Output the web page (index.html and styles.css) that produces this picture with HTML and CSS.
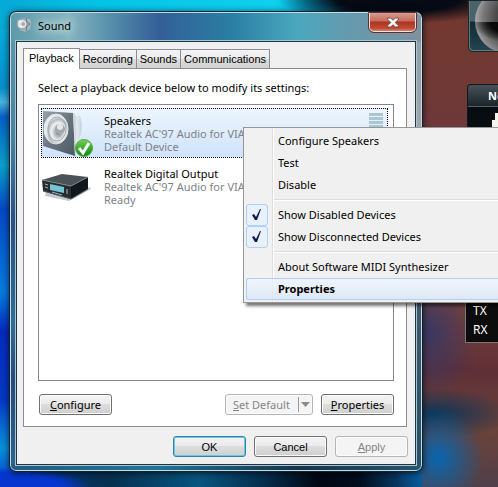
FILE: index.html
```html
<!DOCTYPE html>
<html lang="en">
<head>
<meta charset="utf-8">
<meta name="viewport" content="width=device-width, initial-scale=1">
<title>Sound</title>
<link rel="stylesheet" href="styles.css">
</head>
<body>
<div class="desktop">
  <aside class="gadget moon-gadget" aria-label="Moon">
    <svg width="64" height="64" viewBox="0 0 64 64" aria-hidden="true">
      <defs>
        <radialGradient id="moon" cx=".66" cy=".45" r=".66"><stop offset="0" stop-color="#444"/><stop offset=".5" stop-color="#4a4a4a"/><stop offset=".8" stop-color="#777"/><stop offset="1" stop-color="#aaa"/></radialGradient>
        <radialGradient id="shade" cx=".66" cy="0" r=".7" gradientUnits="objectBoundingBox"><stop offset=".6" stop-color="#080808"/><stop offset="1" stop-color="#080808" stop-opacity=".1"/></radialGradient>
      </defs>
      <circle cx="34" cy="30" r="32" fill="url(#moon)"/>
      <path d="M2 31H66A32 31 0 0 1 2 31Z" fill="url(#shade)"/>
    </svg>
  </aside>
  <aside class="gadget net-gadget">
    <div class="net-title">Ne</div>
    <svg width="40" height="30" viewBox="0 0 40 30" aria-hidden="true"><path d="M24 21V13H27V6H40V21Z" fill="#f4f4ee"/></svg>
  </aside>
  <aside class="gadget traffic-gadget"><div>TX</div><div>RX</div></aside>

  <main class="window">
    <header class="titlebar">
      <svg class="title-icon" width="16" height="16" viewBox="0 0 16 16" aria-hidden="true">
        <path d="M1 3L8 1L14 2L15 5L14 12L9 15L4 13L1 9Z" fill="#aab4b9"/>
        <circle cx="6" cy="7" r="5" fill="#dde2e4" stroke="#8b989f"/>
        <circle cx="7" cy="7" r="2" fill="#a3adb3"/>
        <path d="M10 1L11 5L14 7L11 9L10 14" fill="none" stroke="#6d7b83"/>
        <path d="M3 4L6 6M4 10L6 8" stroke="#fff"/>
      </svg>
      <h1 class="title">Sound</h1>
      <button class="close" type="button" aria-label="Close">
        <svg width="14" height="11" viewBox="0 0 12 10" aria-hidden="true"><path d="M1 1H4L6 3L8 1H11V2L8 5L11 8V9H8L6 7L4 9H1V8L4 5L1 2Z" fill="#fff" stroke="#5e3434" stroke-width=".7"/></svg>
      </button>
    </header>
    <div class="client">
      <div class="tabs" role="tablist">
        <button class="tab active" type="button" role="tab" aria-selected="true">Playback</button>
        <button class="tab" type="button" role="tab" aria-selected="false">Recording</button>
        <button class="tab" type="button" role="tab" aria-selected="false">Sounds</button>
        <button class="tab" type="button" role="tab" aria-selected="false">Communications</button>
      </div>
      <section class="panel" role="tabpanel">
        <p class="prompt">Select a playback device below to modify its settings:</p>
        <ul class="devices">
          <li class="device selected">
            <svg class="device-icon" width="52" height="48" viewBox="0 0 52 48" aria-hidden="true">
              <defs>
                <linearGradient id="box" x2="1" y2="1"><stop stop-color="#98a2a9"/><stop offset=".5" stop-color="#69757e"/><stop offset="1" stop-color="#4c5962"/></linearGradient>
                <linearGradient id="side" x2="1"><stop stop-color="#a9b5bf"/><stop offset=".5" stop-color="#e4ebf0"/><stop offset="1" stop-color="#c1cfdb"/></linearGradient>
                <radialGradient id="cone" cx=".6" cy=".6"><stop stop-color="#737b80"/><stop offset=".3" stop-color="#b3babd"/><stop offset=".6" stop-color="#f0f2f3"/><stop offset=".85" stop-color="#b1b9be"/><stop offset="1" stop-color="#e7eaec"/></radialGradient>
                <linearGradient id="ok" y2="1" x2="0"><stop stop-color="#79d45b"/><stop offset=".5" stop-color="#39ab2b"/><stop offset="1" stop-color="#168718"/></linearGradient>
              </defs>
              <path d="M30 6L38 7Q42 18 37 31L32 38Z" fill="url(#side)"/>
              <path d="M1 2L31 4L33 47L1 37Z" fill="url(#box)"/>
              <path d="M31 4L33 47L34 46L33 5Z" fill="#d3dbe0"/>
              <ellipse cx="14" cy="20" rx="12" ry="15" fill="url(#cone)" stroke="#e4e8ea"/>
              <ellipse cx="15" cy="20" rx="9" ry="12" fill="none" stroke="#a1aaaf"/>
              <circle cx="18" cy="20" r="5" fill="#a2aaae"/>
              <circle cx="18" cy="18" r="3" fill="#e5e7e8"/>
              <circle cx="42" cy="39" r="8.500" fill="url(#ok)" stroke="#53a945"/>
              <path d="M37 39L41 44L47 34" fill="none" stroke="#fff" stroke-width="3"/>
            </svg>
            <div class="device-text"><strong>Speakers</strong><span>Realtek AC'97 Audio for VIA</span><span>Default Device</span></div>
            <div class="meter"><i></i><i></i><i></i><i></i><i></i><i></i><i></i></div>
          </li>
          <li class="device">
            <svg class="device-icon" width="52" height="48" viewBox="0 0 52 48" aria-hidden="true">
              <path d="M4 28L26 34L48 25L49 27L27 39L3 34Z" fill="#c5cbd0"/>
              <path d="M0 18L20 12L46 15L29 24Z" fill="#4c5358"/>
              <path d="M0 18L29 24V37L1 29Z" fill="#262d31"/>
              <path d="M29 24L46 15V27L29 37Z" fill="#11171a"/>
              <path d="M0 18L29 24L46 15" fill="none" stroke="#7c858a"/>
              <path d="M8 22L22 25V31L8 28Z" fill="#75c5d5"/>
              <path d="M3 22L6 23M3 25L6 26M25 27V32M10 30L20 33" stroke="#a9b5bb"/>
              <path d="M1 29L29 37L46 27" fill="none" stroke="#50595f"/>
            </svg>
            <div class="device-text"><strong>Realtek Digital Output</strong><span>Realtek AC'97 Audio for VIA</span><span>Ready</span></div>
          </li>
        </ul>
        <div class="actions">
          <button class="btn" type="button"><u>C</u>onfigure</button>
          <span class="spacer"></span>
          <button class="btn split" type="button" disabled><span><u>S</u>et Default</span><span class="arrow"><svg width="9" height="5" viewBox="0 0 9 5" aria-hidden="true"><path d="M0 0H9L4.500 5Z" fill="#8b8b8b"/></svg></span></button>
          <button class="btn" type="button"><u>P</u>roperties</button>
        </div>
      </section>
      <footer class="footer">
        <button class="btn primary" type="button">OK</button>
        <button class="btn" type="button">Cancel</button>
        <button class="btn" type="button" disabled><u>A</u>pply</button>
      </footer>
    </div>
  </main>

  <div class="menu" role="menu">
    <button class="item" type="button" role="menuitem">Configure Speakers</button>
    <button class="item" type="button" role="menuitem">Test</button>
    <button class="item" type="button" role="menuitem">Disable</button>
    <hr>
    <button class="item" type="button" role="menuitemcheckbox" aria-checked="true"><span class="check"><svg width="10" height="12" viewBox="0 0 10 12" aria-hidden="true"><path d="M0 6L2 5L4 8L8 0H9L5 11H3Z" fill="#15154f"/></svg></span>Show Disabled Devices</button>
    <button class="item" type="button" role="menuitemcheckbox" aria-checked="true"><span class="check"><svg width="10" height="12" viewBox="0 0 10 12" aria-hidden="true"><path d="M0 6L2 5L4 8L8 0H9L5 11H3Z" fill="#15154f"/></svg></span>Show Disconnected Devices</button>
    <hr>
    <button class="item" type="button" role="menuitem">About Software MIDI Synthesizer</button>
    <button class="item current" type="button" role="menuitem">Properties</button>
  </div>
</div>
</body>
</html>
```
FILE: styles.css
```css
* { box-sizing: border-box; }

body {
  margin: 0;
  font: 11px/16px "Noto Sans", "Open Sans", sans-serif;
  color: #000;
}

button { font: inherit; color: inherit; padding: 0; margin: 0; }

.desktop {
  position: relative;
  display: flex;
  flex-direction: column;
  height: 100vh;
  min-height: 440px;
  overflow: hidden;
  background:
    radial-gradient(ellipse 120px 24px at 80% 0, #060a14 50%, transparent),
    radial-gradient(ellipse 45px 50px at 88% 94%, #0766b0, transparent),
    radial-gradient(ellipse 80px 26px at 87% 85%, #0b3558, transparent),
    radial-gradient(ellipse 50px 70px at 86% 68%, rgba(44, 56, 110, .8), transparent),
    linear-gradient(#74392e, #6a3840 40%, #7f4236 62%, #5f3038 76%, #6b4238 88%, #50404a) 100% 0 / 76px 100% no-repeat,
    radial-gradient(ellipse 90px 20px at 0 100%, #0636cf 70%, transparent),
    linear-gradient(90deg, #07a9d6, #04c4e8 20%, #10d0ee 55%, #04a0d0 66%, transparent 72%) 0 0 / 100% 30px no-repeat,
    linear-gradient(#06bce2, #078fce 18%, #4ab4dc 21%, #0560c8 24%, #0aa0cc 34%, #0548c8 43%, #067ce0 60%, #052bc0 68%, #0638c8 82%, #0892dc 92%, #0636cf) 0 0 / 30px 100% no-repeat,
    linear-gradient(90deg, #05368c, #06304f 22%, #085580 40%, #052a48 54%, #020713 64%, #020c1c 72%, #0a5a98 86%, #40303f);
}

.window {
  flex: 1;
  display: flex;
  flex-direction: column;
  margin: 12px 76px 16px 10px;
  padding: 0 5px 5px;
  border: 1px solid #c1dce4;
  border-radius: 6px;
  outline: 1px solid #14202c;
  background:
    linear-gradient(90deg, #5c9aab 0, #87b5c0 14%, #578fac 24%, #345f97 36%, #2a7fa4 54%, #4ba8bd 70%, #659aae 82%, #7e929f) 0 0 / 100% 29px no-repeat,
    linear-gradient(90deg, #245a81, #1f7595 35%, #17344d 70%, #25556f) 0 100% / 100% 6px no-repeat,
    linear-gradient(#939ca4, #a2a4ab 25%, #485a6c 55%, #245169) 100% 0 / 8px 100% no-repeat,
    linear-gradient(#609bae, #4780a2 28%, #294f87 45%, #2d6d95 68%, #26497e 80%, #2a668f);
  box-shadow: 0 1px 7px 1px rgba(0, 0, 0, .65);
}

.titlebar { display: flex; height: 28px; align-items: flex-start; }
.title-icon { margin: 4px 6px 0 0; }
.title {
  flex: 1;
  margin: 4px 0 0;
  font-size: 11px;
  line-height: 18px;
  font-weight: 400;
  text-shadow: 0 0 8px #fff, 0 0 12px #fff;
}
.close {
  display: grid;
  place-items: center;
  width: 47px;
  height: 19px;
  border: 1px solid #eee1df;
  border-top: 0;
  border-radius: 0 0 5px 5px;
  outline: 1px solid #612f31;
  background: linear-gradient(#d99c91, #c56a59 45%, #ab3521 50%, #be4c35 85%, #d68672);
}

.client {
  flex: 1;
  display: flex;
  flex-direction: column;
  min-height: 0;
  padding: 6px 8px 7px 6px;
  border: 1px solid #1c3541;
  outline: 1px solid #a7c6d2;
  background: #f0f0f0;
}

.tabs { display: flex; align-items: flex-end; font: 11px/16px "Liberation Sans", sans-serif; position: relative; }
.tab {
  height: 19px;
  padding: 0 3px;
  border: 1px solid #898c95;
  border-left-width: 0;
  border-bottom: 0;
  background: linear-gradient(#f3f3f3, #ebebeb 50%, #dcdcdc 52%, #d2d2d2);
}
.tab.active {
  height: 21px;
  margin-bottom: -1px;
  padding: 0 5px 2px;
  border-left-width: 1px;
  background: #fff;
}

.panel {
  flex: 1;
  display: flex;
  flex-direction: column;
  padding: 11px 12px 11px 14px;
  border: 1px solid #898c95;
  background: #fff;
}
.prompt { margin: 0 0 8px; white-space: nowrap; }

.devices {
  flex: 1;
  min-height: 110px;
  margin: 0;
  padding: 3px 5px 3px 2px;
  border: 1px solid #828790;
  list-style: none;
}
.device { display: flex; height: 50px; margin-bottom: 3px; border: 1px solid transparent; }
.device.selected { border: 1px dotted #111; background: linear-gradient(#edf5fd, #cfe3fb); }
.device-icon { flex: none; margin-right: 10px; }
.device-text { flex: 1; display: flex; flex-direction: column; padding-top: 5px; line-height: 13px; white-space: nowrap; }
.device-text strong { font-weight: 400; }
.device-text span { color: #7d8389; }
.meter { display: grid; align-content: start; gap: 1px; margin: 4px 4px 0 0; }
.meter i { width: 14px; height: 3px; background: #a9c8d4; }

.actions { display: flex; gap: 8px; padding: 13px 0 0 1px; }
.spacer { flex: 1; }
.btn {
  width: 73px;
  height: 21px;
  border: 1px solid #707070;
  border-radius: 3px;
  background: linear-gradient(#f3f3f3, #ebebeb 48%, #dddddd 50%, #cfcfcf);
  box-shadow: inset 0 0 0 1px #fbfbfb;
  white-space: nowrap;
}
.btn:disabled { border-color: #b3b6b8; background: #f4f4f4; color: #858585; }
.btn.primary { border-color: #397f9e; box-shadow: inset 0 0 0 1px #64cbea; }
.btn.split { display: flex; align-items: center; width: 88px; padding-left: 7px; }
.arrow { display: grid; place-items: center; height: 15px; margin-left: auto; padding: 0 2px; border-left: 1px solid #999; }
.footer { display: flex; justify-content: flex-end; gap: 8px; padding-top: 9px; margin-right: -1px; font: 11px/16px "Liberation Sans", sans-serif; }

.menu {
  position: absolute;
  left: 243px;
  top: 127px;
  right: 0;
  padding: 2px 0 2px 2px;
  border: 1px solid #979797;
  border-right: 0;
  background: linear-gradient(90deg, #f1f1f1 28px, #dedede 28px, #dedede 29px, #fff 29px, #fff 30px, #f0f0f0 30px);
  box-shadow: 3px 3px 3px rgba(0, 0, 0, .55);
}
.menu hr { height: 2px; margin: 3px 0 3px 28px; border: 0; border-top: 1px solid #dcdcdc; background: #fff; }
.item {
  position: relative;
  display: block;
  width: 100%;
  height: 22px;
  padding-left: 32px;
  border: 0;
  background: none;
  text-align: left;
  white-space: nowrap;
}
.check {
  position: absolute;
  left: 0;
  top: 0;
  display: grid;
  place-items: center;
  width: 22px;
  height: 22px;
  border: 1px solid #afd0f7;
  border-radius: 3px;
  background: #e8f0f9;
}
.item.current {
  padding-left: 31px;
  border: 1px solid #aecff7;
  border-right: 0;
  border-radius: 3px 0 0 3px;
  background: linear-gradient(rgba(240, 246, 254, .8), rgba(218, 230, 245, .8));
  font-weight: 700;
}

.gadget { position: absolute; right: 0; overflow: hidden; border: 1px solid #11191f; border-right: 0; color: #fff; }
.moon-gadget { top: 0; width: 30px; height: 52px; border-radius: 0 0 0 5px; border-color: #1c272c; box-shadow: inset 1px -1px #67777e; background: linear-gradient(#49636d 40%, #122b35 42%, #24454f); }
.moon-gadget svg { display: block; margin: -10px 0 0 4px; }
.net-gadget { top: 84px; width: 31px; height: 90px; border-radius: 4px 0 0 0; background: #070d11; }
.net-title { height: 22px; padding: 3px 0 0 20px; border-bottom: 1px solid #566168; background: linear-gradient(#455158, #1b252c); font-weight: 700; }
.traffic-gadget { top: 280px; width: 33px; height: 63px; padding: 20px 0 0 7px; border-color: #777; background: #0c0c0c; font-size: 12px; line-height: 19px; }
```
